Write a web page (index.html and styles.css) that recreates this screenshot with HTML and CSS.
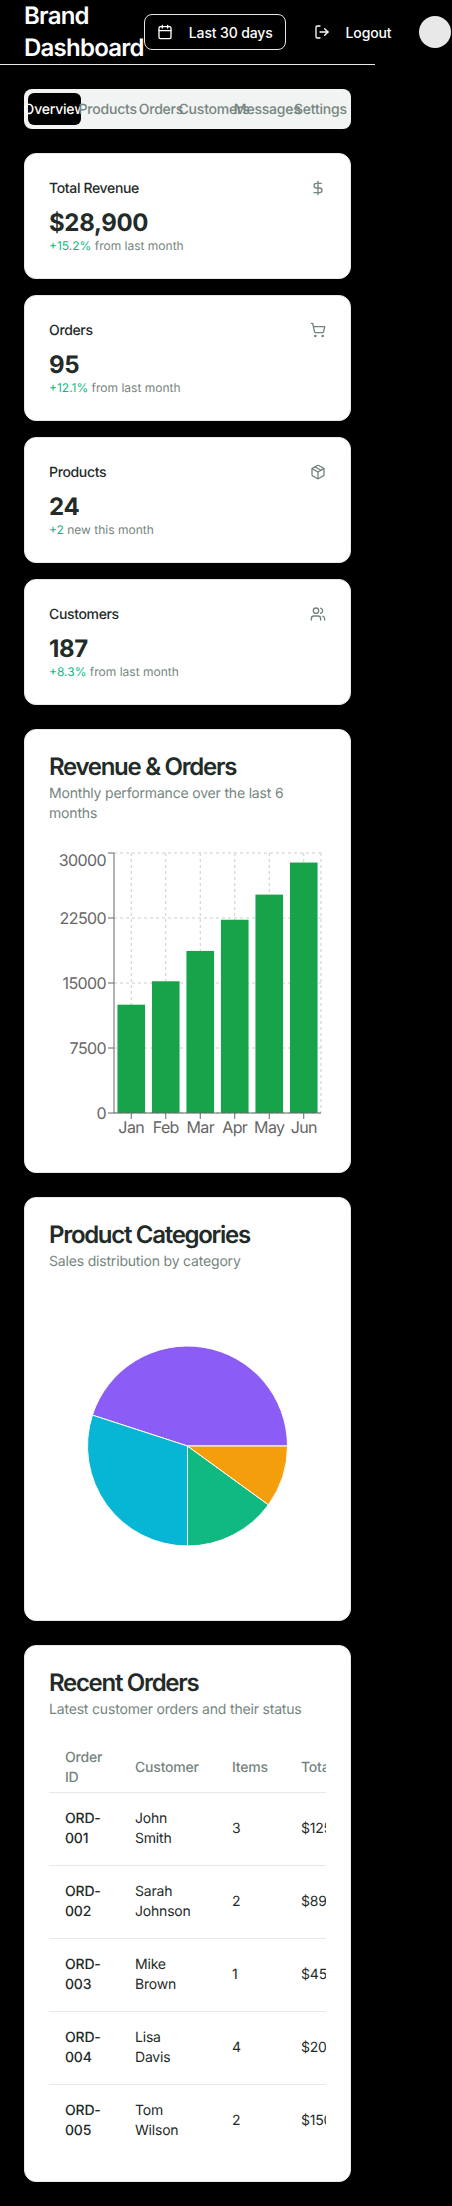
FILE: index.html
```html
<!DOCTYPE html>
<html>
    <head>
        <meta charset="UTF-8" />
        <title>Brand Dashboard</title>
        <link rel="stylesheet" href="styles.css">
    </head>

    <body>
        <div class="page">
            <header class="top-bar">
                <h1 class="brand">Brand Dashboard</h1>
                <div class="top-actions">
                    <button class="btn btn-range">
                        <svg class="icon" viewBox="0 0 24 24"><rect x="3" y="4" width="18" height="18" rx="2"/><path d="M16 2v4M8 2v4M3 10h18"/></svg>
                        Last 30 days
                    </button>
                    <button class="btn btn-logout">
                        <svg class="icon" viewBox="0 0 24 24"><path d="M9 21H5a2 2 0 0 1-2-2V5a2 2 0 0 1 2-2h4"/><path d="M16 17l5-5-5-5"/><path d="M21 12H9"/></svg>
                        Logout
                    </button>
                    <div class="avatar"></div>
                </div>
            </header>

            <main class="content">
                <nav class="tabs">
                    <span class="tab active">Overview</span>
                    <span class="tab">Products</span>
                    <span class="tab">Orders</span>
                    <span class="tab">Customers</span>
                    <span class="tab">Messages</span>
                    <span class="tab">Settings</span>
                </nav>

                <section class="stats">
                    <div class="card stat">
                        <div class="stat-head">
                            <span class="stat-label">Total Revenue</span>
                            <svg class="icon muted" viewBox="0 0 24 24"><path d="M12 2v20"/><path d="M17 5H9.5a3.5 3.5 0 0 0 0 7h5a3.5 3.5 0 0 1 0 7H6"/></svg>
                        </div>
                        <div class="stat-value">$28,900</div>
                        <p class="stat-note"><span class="up">+15.2%</span> from last month</p>
                    </div>
                    <div class="card stat">
                        <div class="stat-head">
                            <span class="stat-label">Orders</span>
                            <svg class="icon muted" viewBox="0 0 24 24"><circle cx="8" cy="21" r="1"/><circle cx="19" cy="21" r="1"/><path d="M2.05 2.05h2l2.66 12.42a2 2 0 0 0 2 1.58h9.78a2 2 0 0 0 1.95-1.57l1.65-7.43H5.12"/></svg>
                        </div>
                        <div class="stat-value">95</div>
                        <p class="stat-note"><span class="up">+12.1%</span> from last month</p>
                    </div>
                    <div class="card stat">
                        <div class="stat-head">
                            <span class="stat-label">Products</span>
                            <svg class="icon muted" viewBox="0 0 24 24"><path d="M7.5 4.27l9 5.15"/><path d="M21 8a2 2 0 0 0-1-1.73l-7-4a2 2 0 0 0-2 0l-7 4A2 2 0 0 0 3 8v8a2 2 0 0 0 1 1.73l7 4a2 2 0 0 0 2 0l7-4A2 2 0 0 0 21 16Z"/><path d="M3.3 7 12 12l8.7-5"/><path d="M12 22V12"/></svg>
                        </div>
                        <div class="stat-value">24</div>
                        <p class="stat-note"><span class="up">+2</span> new this month</p>
                    </div>
                    <div class="card stat">
                        <div class="stat-head">
                            <span class="stat-label">Customers</span>
                            <svg class="icon muted" viewBox="0 0 24 24"><path d="M16 21v-2a4 4 0 0 0-4-4H6a4 4 0 0 0-4 4v2"/><circle cx="9" cy="7" r="4"/><path d="M22 21v-2a4 4 0 0 0-3-3.87"/><path d="M16 3.13a4 4 0 0 1 0 7.75"/></svg>
                        </div>
                        <div class="stat-value">187</div>
                        <p class="stat-note"><span class="up">+8.3%</span> from last month</p>
                    </div>
                </section>

                <section class="card panel">
                    <h2 class="panel-title">Revenue &amp; Orders</h2>
                    <p class="panel-sub">Monthly performance over the last 6 months</p>
                    <svg class="chart" viewBox="0 0 277 300">
                        <g class="grid">
                            <path d="M65 5H272M65 70H272M65 135H272M65 200H272M65 265H272"/>
                            <path d="M82.25 5V265M116.75 5V265M151.25 5V265M185.75 5V265M220.25 5V265M254.75 5V265M272 5V265"/>
                        </g>
                        <g class="bars">
                            <rect x="68.45" y="156.67" width="27.6" height="108.33"/>
                            <rect x="102.95" y="133.27" width="27.6" height="131.73"/>
                            <rect x="137.45" y="102.93" width="27.6" height="162.07"/>
                            <rect x="171.95" y="71.73" width="27.6" height="193.27"/>
                            <rect x="206.45" y="46.6" width="27.6" height="218.4"/>
                            <rect x="240.95" y="14.53" width="27.6" height="250.47"/>
                        </g>
                        <path class="axis" d="M65 5V265H272"/>
                        <path class="axis" d="M59 5H65M59 70H65M59 135H65M59 200H65M59 265H65"/>
                        <path class="axis" d="M82.25 265v6M116.75 265v6M151.25 265v6M185.75 265v6M220.25 265v6M254.75 265v6"/>
                        <g class="ticks-y">
                            <text x="57" y="18">30000</text>
                            <text x="57" y="76">22500</text>
                            <text x="57" y="141">15000</text>
                            <text x="57" y="206">7500</text>
                            <text x="57" y="271">0</text>
                        </g>
                        <g class="ticks-x">
                            <text x="82.25" y="285">Jan</text>
                            <text x="116.75" y="285">Feb</text>
                            <text x="151.25" y="285">Mar</text>
                            <text x="185.75" y="285">Apr</text>
                            <text x="220.25" y="285">May</text>
                            <text x="254.75" y="285">Jun</text>
                        </g>
                    </svg>
                </section>

                <section class="card panel">
                    <h2 class="panel-title">Product Categories</h2>
                    <p class="panel-sub">Sales distribution by category</p>
                    <svg class="chart" viewBox="0 0 277 300">
                        <g class="slices">
                            <path fill="#8b5cf6" d="M138.5 150L238.5 150A100 100 0 0 0 43.4 119.1Z"/>
                            <path fill="#06b6d4" d="M138.5 150L43.4 119.1A100 100 0 0 0 138.5 250Z"/>
                            <path fill="#10b981" d="M138.5 150L138.5 250A100 100 0 0 0 219.4 208.8Z"/>
                            <path fill="#f59e0b" d="M138.5 150L219.4 208.8A100 100 0 0 0 238.5 150Z"/>
                        </g>
                    </svg>
                </section>

                <section class="card panel">
                    <h2 class="panel-title">Recent Orders</h2>
                    <p class="panel-sub">Latest customer orders and their status</p>
                    <div class="table-wrap">
                        <table class="orders">
                            <colgroup>
                                <col class="col-id">
                                <col class="col-customer">
                                <col class="col-items">
                                <col class="col-total">
                            </colgroup>
                            <thead>
                                <tr><th>Order ID</th><th>Customer</th><th>Items</th><th>Total</th></tr>
                            </thead>
                            <tbody>
                                <tr><td class="order-id">ORD-001</td><td class="customer">John Smith</td><td>3</td><td>$125.00</td></tr>
                                <tr><td class="order-id">ORD-002</td><td class="customer">Sarah Johnson</td><td>2</td><td>$89.50</td></tr>
                                <tr><td class="order-id">ORD-003</td><td class="customer">Mike Brown</td><td>1</td><td>$45.00</td></tr>
                                <tr><td class="order-id">ORD-004</td><td class="customer">Lisa Davis</td><td>4</td><td>$200.00</td></tr>
                                <tr><td class="order-id">ORD-005</td><td class="customer">Tom Wilson</td><td>2</td><td>$150.00</td></tr>
                            </tbody>
                        </table>
                    </div>
                </section>
            </main>
        </div>
    </body>
</html>
```

FILE: styles.css
```css
* {
    margin: 0;
    padding: 0;
    box-sizing: border-box;
}

html,
body {
    background-color: #000;
}

body {
    font-family: Inter, "Liberation Sans", sans-serif;
    color: #232b28;
    text-rendering: geometricPrecision;
}

.page {
    width: 375px;
}

.top-bar {
    display: flex;
    align-items: center;
    justify-content: space-between;
    height: 65px;
    padding: 0 24px;
    border-bottom: 1px solid #e5e7e6;
}

.brand {
    font-size: 24px;
    line-height: 32px;
    font-weight: 600;
    letter-spacing: -0.75px;
    color: #fff;
}

.top-actions {
    display: flex;
    align-items: center;
    flex: none;
    gap: 12px;
}

.btn {
    display: flex;
    align-items: center;
    gap: 16px;
    height: 36px;
    font-family: inherit;
    font-size: 14px;
    font-weight: 500;
    letter-spacing: -0.14px;
    color: #fff;
    background: none;
    border: none;
    border-radius: 8px;
    white-space: nowrap;
}

.btn-range {
    padding: 0 12px;
    border: 1px solid #e5e7e6;
}

.btn-logout {
    padding: 0 16px;
}

.avatar {
    width: 32px;
    height: 32px;
    border-radius: 50%;
    background-color: #e8e8e8;
}

.icon {
    flex: none;
    width: 16px;
    height: 16px;
    fill: none;
    stroke: currentColor;
    stroke-width: 2;
    stroke-linecap: round;
    stroke-linejoin: round;
}

.muted {
    color: #75857e;
}

.content {
    display: flex;
    flex-direction: column;
    gap: 24px;
    padding: 24px;
}

.tabs {
    display: grid;
    grid-template-columns: repeat(6, minmax(0, 1fr));
    height: 40px;
    padding: 4px;
    border-radius: 8px;
    background-color: #f2f3f3;
}

.tab {
    display: flex;
    align-items: center;
    justify-content: center;
    border-radius: 6px;
    font-size: 14px;
    font-weight: 500;
    letter-spacing: -0.2px;
    white-space: nowrap;
    color: #75857e;
}

.tab.active {
    background-color: #000;
    color: #fff;
}

.card {
    background-color: #fff;
    border: 1px solid #e5e9e7;
    border-radius: 12px;
    padding: 24px;
}

.stats {
    display: flex;
    flex-direction: column;
    gap: 16px;
}

.stat-head {
    display: flex;
    align-items: center;
    justify-content: space-between;
    height: 20px;
    margin-bottom: 9px;
}

.stat-label {
    font-size: 14px;
    font-weight: 500;
    letter-spacing: -0.35px;
}

.stat-value {
    font-size: 24px;
    line-height: 31px;
    font-weight: 700;
    letter-spacing: -0.35px;
}

.stat-note {
    font-size: 12px;
    line-height: 16px;
    color: #75857e;
}

.up {
    color: #10b981;
}

.panel-title {
    font-size: 24px;
    line-height: 26px;
    font-weight: 600;
    letter-spacing: -1.3px;
}

.panel-sub {
    margin-top: 4px;
    font-size: 14px;
    line-height: 20px;
    letter-spacing: -0.18px;
    color: #75857e;
}

.chart {
    display: block;
    width: 277px;
    height: 300px;
    margin-top: 24px;
}

.grid path {
    fill: none;
    stroke: #ccc;
    stroke-dasharray: 3 3;
}

.bars rect {
    fill: #16a34a;
}

.axis {
    fill: none;
    stroke: #666;
}

.ticks-y text,
.ticks-x text {
    font-size: 16px;
    letter-spacing: -0.6px;
    fill: #666;
}

.ticks-y text {
    text-anchor: end;
}

.ticks-x text {
    text-anchor: middle;
}

.slices path {
    stroke: #fff;
}

.table-wrap {
    margin-top: 24px;
    overflow: hidden;
}

.orders {
    table-layout: fixed;
    width: 400px;
    border-collapse: collapse;
    font-size: 14px;
    line-height: 20px;
    letter-spacing: -0.2px;
}

.col-id {
    width: 70px;
}

.col-customer {
    width: 97px;
}

.col-items {
    width: 69px;
}

.col-total {
    width: 164px;
}

.orders th {
    height: 48px;
    padding: 0 16px;
    text-align: left;
    font-weight: 500;
    color: #75857e;
    border-bottom: 1px solid #e5e9e7;
}

.orders td {
    padding: 16px;
    border-bottom: 1px solid #e5e9e7;
}

.orders td.customer {
    padding-right: 20px;
}

.orders tbody tr:last-child td {
    border-bottom: none;
}

.order-id {
    font-weight: 500;
}
```
